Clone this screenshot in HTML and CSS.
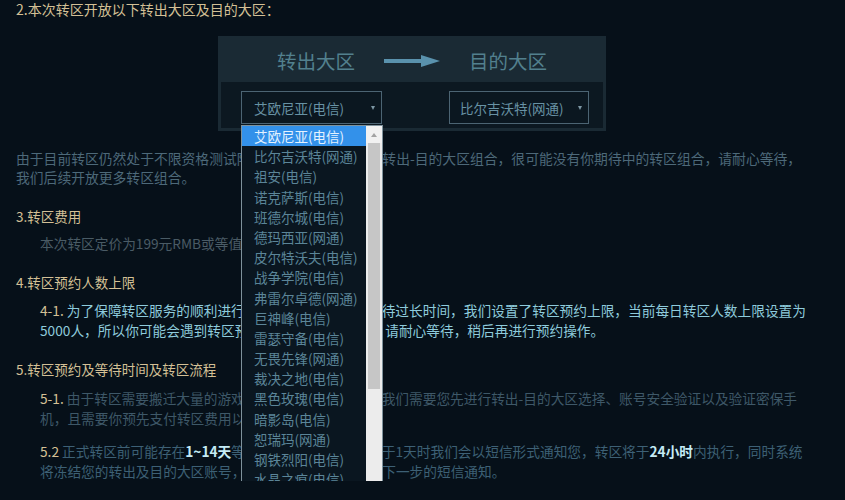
FILE: index.html
```html
<!DOCTYPE html>
<html>
<head>
    <title>转区说明</title>
    <link rel="stylesheet" href="styles.css">
</head>
<body>
    <div id="page">
        <p class="section-title first">2.本次转区开放以下转出大区及目的大区：</p>

        <div class="server-box">
            <div class="box-head">
                <span class="box-title">转出大区</span>
                <span class="box-arrow">
                    <svg width="56" height="16" viewBox="0 0 56 16">
                        <rect x="0" y="6" width="40" height="4" fill="#5a92ad"/>
                        <polygon points="37,2 56,8 37,14" fill="#5a92ad"/>
                    </svg>
                </span>
                <span class="box-title">目的大区</span>
            </div>
            <div class="box-body">
                <div class="select-wrap">
                    <div class="fake-select from">艾欧尼亚(电信)<span class="caret"></span></div>
                    <div class="dropdown">
                        <div class="options">
                            <div class="option selected">艾欧尼亚(电信)</div>
                            <div class="option">比尔吉沃特(网通)</div>
                            <div class="option">祖安(电信)</div>
                            <div class="option">诺克萨斯(电信)</div>
                            <div class="option">班德尔城(电信)</div>
                            <div class="option">德玛西亚(网通)</div>
                            <div class="option">皮尔特沃夫(电信)</div>
                            <div class="option">战争学院(电信)</div>
                            <div class="option">弗雷尔卓德(网通)</div>
                            <div class="option">巨神峰(电信)</div>
                            <div class="option">雷瑟守备(电信)</div>
                            <div class="option">无畏先锋(网通)</div>
                            <div class="option">裁决之地(电信)</div>
                            <div class="option">黑色玫瑰(电信)</div>
                            <div class="option">暗影岛(电信)</div>
                            <div class="option">恕瑞玛(网通)</div>
                            <div class="option">钢铁烈阳(电信)</div>
                            <div class="option">水晶之痕(电信)</div>
                            <div class="option">均衡教派(电信)</div>
                            <div class="option">影流(电信)</div>
                            <div class="option">守望之海(电信)</div>
                        </div>
                        <div class="scrollbar">
                            <div class="scroll-btn up"><span class="tri-up"></span></div>
                            <div class="scroll-thumb"></div>
                            <div class="scroll-btn down"><span class="tri-down"></span></div>
                        </div>
                    </div>
                </div>
                <div class="fake-select to">比尔吉沃特(网通)<span class="caret"></span></div>
            </div>
        </div>

        <p class="intro">由于目前转区仍然处于不限资格测试阶段，只开放了以上8个转出-目的大区组合，很可能没有你期待中的转区组合，请耐心等待，<br>我们后续开放更多转区组合。</p>

        <p class="section-title">3.转区费用</p>
        <p class="detail price">本次转区定价为199元RMB或等值点券。</p>

        <p class="section-title">4.转区预约人数上限</p>
        <p class="detail notice"><span class="num">4-1.</span> 为了保障转区服务的顺利进行，避免玩家在转区时等待过长时间，我们设置了转区预约上限，当前每日转区人数上限设置为<br>5000人，所以你可能会遇到转区预约人数已达到了上限，请耐心等待，稍后再进行预约操作。</p>

        <p class="section-title">5.转区预约及等待时间及转区流程</p>
        <p class="detail dim"><span class="num">5-1.</span> 由于转区需要搬迁大量的游戏数据，为了数据安全，我们需要您先进行转出-目的大区选择、账号安全验证以及验证密保手<br>机，且需要你预先支付转区费用以便进行审核。</p>
        <p class="detail step"><span class="num">5.2</span> 正式转区前可能存在<b>1~14天</b>等待时间，当等待时间小于1天时我们会以短信形式通知您，转区将于<b>24小时</b>内执行，同时系统<br>将冻结您的转出及目的大区账号，转区完成前请耐心等待下一步的短信通知。</p>
    </div>
</body>
</html>
```

FILE: styles.css
```css
body {
    font-family: "Noto Sans CJK SC", "Microsoft YaHei", sans-serif;
    background-color: #061019;
    margin: 0;
    padding: 0;
    overflow: hidden;
}

#page {
    padding: 0 16px;
    white-space: nowrap;
}

p {
    margin: 0;
}

.section-title {
    color: #d4c096;
    font-size: 13.5px;
    line-height: 20px;
    margin-top: 19px;
}

.section-title.first {
    margin-top: 0;
    line-height: 18px;
    font-size: 14px;
}

/* server box */

.server-box {
    width: 388px;
    margin: 18px 0 0 202px;
    background-color: #1a2a34;
    padding: 0 3px 3px;
    box-sizing: border-box;
}

.box-head {
    height: 46px;
    padding: 4px 0 0 56px;
    box-sizing: border-box;
    display: flex;
    align-items: center;
    gap: 29px;
}

.box-title {
    color: #52808e;
    font-size: 19.5px;
    line-height: 24px;
}

.box-arrow {
    display: flex;
}

.box-body {
    background-color: #0c1821;
    height: 46px;
    padding: 9px 14px 0 20px;
    box-sizing: border-box;
    display: flex;
    justify-content: space-between;
    align-items: flex-start;
}

.select-wrap {
    position: relative;
}

.fake-select {
    height: 33px;
    border: 1px solid #4c6473;
    background-color: #0b1720;
    box-sizing: border-box;
    color: #6892a4;
    font-size: 13.5px;
    display: flex;
    align-items: center;
    justify-content: space-between;
}

.fake-select.from {
    width: 141px;
    padding: 0 6px 0 12px;
}

.fake-select.to {
    width: 140px;
    padding: 0 6px 0 10px;
}

.caret {
    width: 0;
    height: 0;
    border-left: 2.5px solid transparent;
    border-right: 2.5px solid transparent;
    border-top: 4px solid #7d97a4;
}

/* open dropdown list */

.dropdown {
    position: absolute;
    top: 34px;
    left: 0;
    width: 142px;
    height: 385px;
    border: 1px solid #7f929c;
    background-color: #0a1620;
    box-sizing: border-box;
    display: flex;
    overflow: hidden;
}

.options {
    flex: 1;
    overflow: hidden;
}

.option {
    height: 20.2px;
    line-height: 20.2px;
    padding-left: 12px;
    color: #5b8598;
    font-size: 13.5px;
}

.option.selected {
    background-color: #3391ea;
    color: #e4f2ff;
}

.scrollbar {
    width: 16px;
    background-color: #ececec;
    display: flex;
    flex-direction: column;
}

.scroll-btn {
    height: 17px;
    display: flex;
    align-items: center;
    justify-content: center;
    background-color: #f1f1f1;
}

.scroll-btn.down {
    margin-top: auto;
}

.tri-up {
    border-left: 3px solid transparent;
    border-right: 3px solid transparent;
    border-bottom: 4px solid #a3a3a3;
}

.tri-down {
    border-left: 3px solid transparent;
    border-right: 3px solid transparent;
    border-top: 4px solid #505050;
}

.scroll-thumb {
    height: 246px;
    margin: 0 2px;
    background-color: #c6c6c6;
}

/* text blocks */

.intro {
    color: #4d6979;
    font-size: 13.8px;
    line-height: 19px;
    margin-top: 18px;
}

.detail {
    padding-left: 24px;
    font-size: 13.7px;
    line-height: 20px;
    margin-top: 8px;
}

.num {
    color: #d4c096;
}

.price {
    color: #4a5b65;
    margin-top: 7px;
}

.notice {
    color: #8ecbdc;
}

.dim {
    color: #3e5868;
    margin-top: 9px;
}

.step {
    color: #3d6075;
    margin-top: 13px;
}

.step b {
    color: #c4ebf5;
}
```
